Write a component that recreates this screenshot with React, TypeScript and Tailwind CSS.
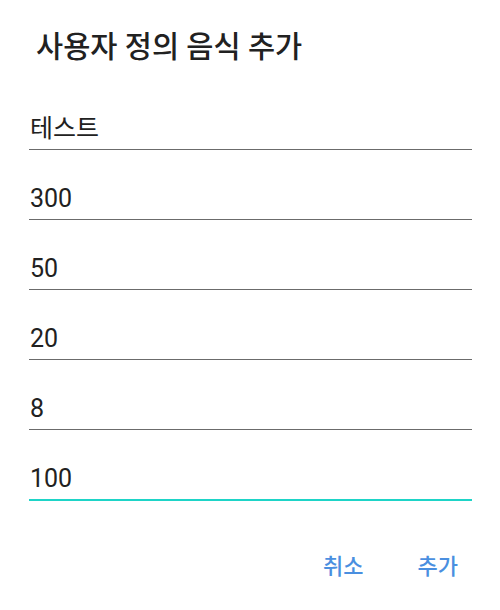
import React from "react";

const fields = ["테스트", "300", "50", "20", "8", "100"];

export default function App() {
  return (
    <div
      className="w-[500px] h-[610px] bg-white overflow-hidden"
      style={{ fontFamily: 'Roboto, "Noto Sans CJK KR", sans-serif' }}
    >
      <div className="pl-[36px] pt-[27px] text-[29.5px] leading-[40px] font-medium text-[#212121]">
        사용자 정의 음식 추가
      </div>
      <div className="mt-[13px] pl-[29px] pr-[28px] flex flex-col">
        {fields.map((v, i) => {
          const last = i === fields.length - 1;
          return (
            <div
              key={i}
              className={
                last
                  ? "h-[71px] flex items-end border-b-2 border-[#1ed4c7]"
                  : "h-[70px] flex items-end border-b border-[#6b6b6b]"
              }
            >
              <span className="text-[25px] leading-[30px] pb-[5px] pl-[1px] text-[#212121]">
                {v}
              </span>
            </div>
          );
        })}
      </div>
      <div className="mt-[52px] flex justify-end pr-[42px] gap-[54px] text-[22px] leading-[28px] font-medium text-[#4a8fe0]">
        <span>취소</span>
        <span>추가</span>
      </div>
    </div>
  );
}
